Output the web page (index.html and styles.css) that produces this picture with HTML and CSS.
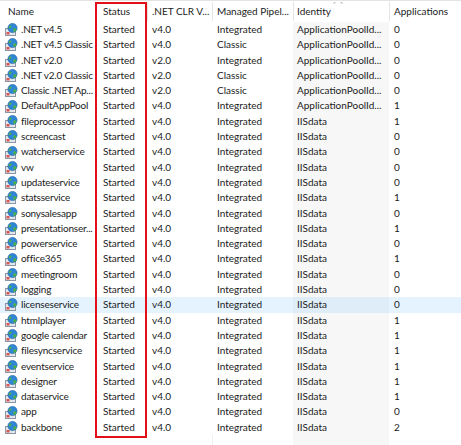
FILE: index.html
```html
<!DOCTYPE html>
<html>
<head>
<meta charset="utf-8">
<link rel="stylesheet" href="styles.css">
</head>
<body>
<div class="list">
  <div class="row head">
    <div class="cell c-name">Name</div>
    <div class="cell c-status">Status</div>
    <div class="cell c-clr sep">.NET CLR V...</div>
    <div class="cell c-pipe sep">Managed Pipel...</div>
    <div class="cell c-id sep"><span class="sort"><svg width="10" height="5" viewBox="0 0 10 5"><path d="M0.5 4.5 L5 0.8 L9.5 4.5" fill="none" stroke="#a0a0a0" stroke-width="1"/></svg></span>Identity</div>
    <div class="cell c-apps sep">Applications</div>
  </div>
  <div id="rows"></div>
  <div class="row filler">
    <div class="cell c-name"></div><div class="cell c-status"></div><div class="cell c-clr"></div><div class="cell c-pipe"></div><div class="cell c-id"></div><div class="cell c-apps"></div>
  </div>
  <div class="redbox"></div>
</div>
<script>
var data = [
  [".NET v4.5","v4.0","Integrated","ApplicationPoolId...","0"],
  [".NET v4.5 Classic","v4.0","Classic","ApplicationPoolId...","0"],
  [".NET v2.0","v2.0","Integrated","ApplicationPoolId...","0"],
  [".NET v2.0 Classic","v2.0","Classic","ApplicationPoolId...","0"],
  ["Classic .NET Ap...","v2.0","Classic","ApplicationPoolId...","0"],
  ["DefaultAppPool","v4.0","Integrated","ApplicationPoolId...","1"],
  ["fileprocessor","v4.0","Integrated","IISdata","1"],
  ["screencast","v4.0","Integrated","IISdata","0"],
  ["watcherservice","v4.0","Integrated","IISdata","0"],
  ["vw","v4.0","Integrated","IISdata","0"],
  ["updateservice","v4.0","Integrated","IISdata","0"],
  ["statsservice","v4.0","Integrated","IISdata","1"],
  ["sonysalesapp","v4.0","Integrated","IISdata","0"],
  ["presentationser...","v4.0","Integrated","IISdata","1"],
  ["powerservice","v4.0","Integrated","IISdata","0"],
  ["office365","v4.0","Integrated","IISdata","1"],
  ["meetingroom","v4.0","Integrated","IISdata","0"],
  ["logging","v4.0","Integrated","IISdata","0"],
  ["licenseservice","v4.0","Integrated","IISdata","0"],
  ["htmlplayer","v4.0","Integrated","IISdata","1"],
  ["google calendar","v4.0","Integrated","IISdata","1"],
  ["filesyncservice","v4.0","Integrated","IISdata","1"],
  ["eventservice","v4.0","Integrated","IISdata","1"],
  ["designer","v4.0","Integrated","IISdata","1"],
  ["dataservice","v4.0","Integrated","IISdata","1"],
  ["app","v4.0","Integrated","IISdata","0"],
  ["backbone","v4.0","Integrated","IISdata","2"]
];
var icon = '<svg class="ico" width="15" height="15" viewBox="0 0 15 15">' +
  '<rect x="1.5" y="6.5" width="10" height="7" fill="#e4e8ec" stroke="#8a96a3"/>' +
  '<rect x="2.5" y="10" width="3" height="2.5" fill="#d9534f"/>' +
  '<circle cx="8.5" cy="6" r="4.6" fill="#2f86d8" stroke="#1f5f9e" stroke-width="0.6"/>' +
  '<path d="M5.7 3.7 C7 2.9 8.1 4.1 7.5 5.1 C6.9 6.1 5.5 5.9 5.1 6.9 C4.5 5.7 4.8 4.3 5.7 3.7 Z" fill="#4cb04a"/>' +
  '<path d="M9.5 6.5 C10.5 5.9 12.1 6.3 12.7 7.3 C12.1 9.1 10.7 10.1 9.5 10.3 C9.9 9.1 8.9 7.5 9.5 6.5 Z" fill="#4cb04a"/>' +
  '</svg>';
var out = "";
data.forEach(function (r) {
  var sel = r[0] === "licenseservice" ? " sel" : "";
  out += '<div class="row item' + sel + '">' +
    '<div class="cell c-name">' + icon + '<span>' + r[0] + '</span></div>' +
    '<div class="cell c-status">Started</div>' +
    '<div class="cell c-clr">' + r[1] + '</div>' +
    '<div class="cell c-pipe">' + r[2] + '</div>' +
    '<div class="cell c-id">' + r[3] + '</div>' +
    '<div class="cell c-apps">' + r[4] + '</div></div>';
});
document.getElementById("rows").innerHTML = out;
</script>
</body>
</html>
```

FILE: styles.css
```css
html, body {
  margin: 0;
  padding: 0;
  background: #ffffff;
}
body {
  width: 461px;
  height: 445px;
  overflow: hidden;
  font-family: Lato, "Liberation Sans", sans-serif;
  font-size: 10px;
  color: #1b1b1b;
}
.list {
  position: relative;
  height: 445px;
  display: flex;
  flex-direction: column;
  border-top: 1px solid #e3e3e3;
  box-sizing: border-box;
}
.row {
  display: grid;
  grid-template-columns: 97px 50px 65px 81px 96px 72px;
}
.head {
  height: 21px;
  align-items: center;
}
.head .cell {
  height: 19px;
  line-height: 19px;
  position: relative;
}
.head .sep {
  border-left: 1px solid #e5e5e5;
}
.head .c-name { padding-left: 8px; }
.head .c-status { padding-left: 6px; }
.head .c-clr { padding-left: 4px; }
.head .c-pipe { padding-left: 4px; }
.head .c-id { padding-left: 3px; }
.head .c-apps { padding-left: 4px; }
.sort {
  position: absolute;
  left: 39px;
  top: -3px;
  line-height: 0;
}
.item {
  height: 15.3px;
  line-height: 15.3px;
}
.cell {
  white-space: nowrap;
  overflow: hidden;
  box-sizing: border-box;
}
.item .c-name {
  display: flex;
  align-items: center;
  padding-left: 4px;
  overflow: visible;
}
.item .c-name span {
  letter-spacing: -0.2px;
}
.ico {
  flex: none;
  margin-right: 2px;
}
.item .c-status { padding-left: 6px; }
.item .c-clr { padding-left: 5px; }
.item .c-pipe { padding-left: 5px; }
.item .c-id { padding-left: 4px; background: #f7f7f7; }
.item .c-apps { padding-left: 5px; }
.item.sel { background: #e5f3ff; }
.item.sel .c-id { background: #dfedf9; }
.filler {
  flex: 1;
}
.filler .c-id { background: #f7f7f7; }
.filler .c-pipe { border-left: 1px solid #f0f0f0; }
.redbox {
  position: absolute;
  left: 95px;
  top: 1px;
  width: 52px;
  height: 436px;
  border: 2px solid #e3101c;
  box-sizing: border-box;
  pointer-events: none;
}
```
